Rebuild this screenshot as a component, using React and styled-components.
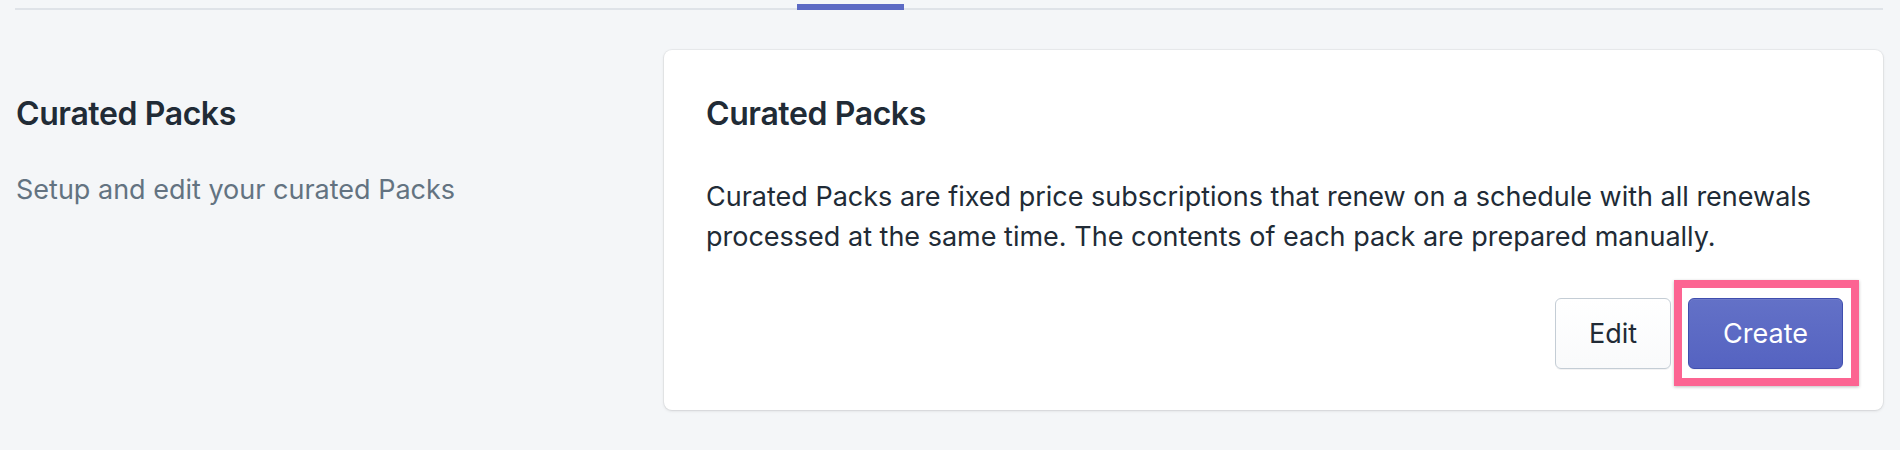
import React from "react";
import styled, { createGlobalStyle } from "styled-components";

const GlobalStyle = createGlobalStyle`
  html, body {
    margin: 0;
    padding: 0;
    background: #f4f6f8;
    font-family: Inter, "Noto Sans", "Liberation Sans", sans-serif;
    color: #212b36;
    -webkit-font-smoothing: antialiased;
  }
`;

const Page = styled.div`
  width: 1900px;
  height: 450px;
  overflow: hidden;
  background: #f4f6f8;
`;

const TabBar = styled.div`
  display: flex;
  align-items: flex-end;
  height: 8px;
  margin: 0 17px 0 15px;
  padding-left: 782px;
  border-bottom: 2px solid #dfe3e8;
`;

const TabIndicator = styled.div`
  width: 107px;
  height: 6px;
  margin-bottom: -2px;
  background: #5c6ac4;
`;

const Section = styled.div`
  display: grid;
  grid-template-columns: 608px 1fr;
  column-gap: 40px;
  margin-top: 40px;
  padding: 0 17px 0 16px;
`;

const Annotation = styled.div`
  padding-top: 40px;
`;

const Heading = styled.h2`
  margin: 0;
  font-size: 32px;
  line-height: 48px;
  font-weight: 600;
  letter-spacing: -0.4px;
  color: #212b36;
`;

const AnnotationText = styled.p`
  margin: 32px 0 0;
  font-size: 27px;
  line-height: 40px;
  color: #637381;
`;

const Card = styled.div`
  background: #ffffff;
  border-radius: 8px;
  box-shadow: 0 0 0 1px rgba(63, 63, 68, 0.05), 0 1px 3px 0 rgba(63, 63, 68, 0.15);
  padding: 40px 40px 41px 42px;
`;

const CardText = styled.p`
  margin: 39px 0 0;
  font-size: 27px;
  line-height: 40px;
  color: #212b36;
`;

const Actions = styled.div`
  display: flex;
  justify-content: flex-end;
  gap: 17px;
  margin-top: 41px;
`;

const Button = styled.button`
  position: relative;
  height: 71px;
  padding: 0 ${(p) => (p.$primary ? 34 : 33)}px;
  border-radius: 6px;
  font-family: inherit;
  font-size: 27px;
  font-weight: 400;
  cursor: pointer;
  color: ${(p) => (p.$primary ? "#ffffff" : "#212b36")};
  background: ${(p) =>
    p.$primary
      ? "linear-gradient(180deg, #6371c7, #5563c1)"
      : "linear-gradient(180deg, #ffffff, #f9fafb)"};
  border: 1px solid ${(p) => (p.$primary ? "#3f4eae" : "#c4cdd5")};
  box-shadow: ${(p) =>
    p.$primary
      ? "inset 0 1px 0 0 #6f7bcb, 0 1px 0 0 rgba(22, 29, 37, 0.05)"
      : "0 1px 0 0 rgba(22, 29, 37, 0.05)"};
`;

const Highlight = styled.span`
  position: absolute;
  top: -19px;
  left: -15px;
  right: -17px;
  bottom: -18px;
  border: 8px solid #fc6492;
  box-shadow: 0 1px 3px rgba(0, 0, 0, 0.25);
  pointer-events: none;
`;

export default function App() {
  return (
    <>
      <GlobalStyle />
      <Page>
        <TabBar>
          <TabIndicator />
        </TabBar>
        <Section>
          <Annotation>
            <Heading>Curated Packs</Heading>
            <AnnotationText>Setup and edit your curated Packs</AnnotationText>
          </Annotation>
          <Card>
            <Heading>Curated Packs</Heading>
            <CardText>
              Curated Packs are fixed price subscriptions that renew on a schedule with all
              renewals processed at the same time. The contents of each pack are prepared
              manually.
            </CardText>
            <Actions>
              <Button>Edit</Button>
              <Button $primary>
                Create
                <Highlight />
              </Button>
            </Actions>
          </Card>
        </Section>
      </Page>
    </>
  );
}
